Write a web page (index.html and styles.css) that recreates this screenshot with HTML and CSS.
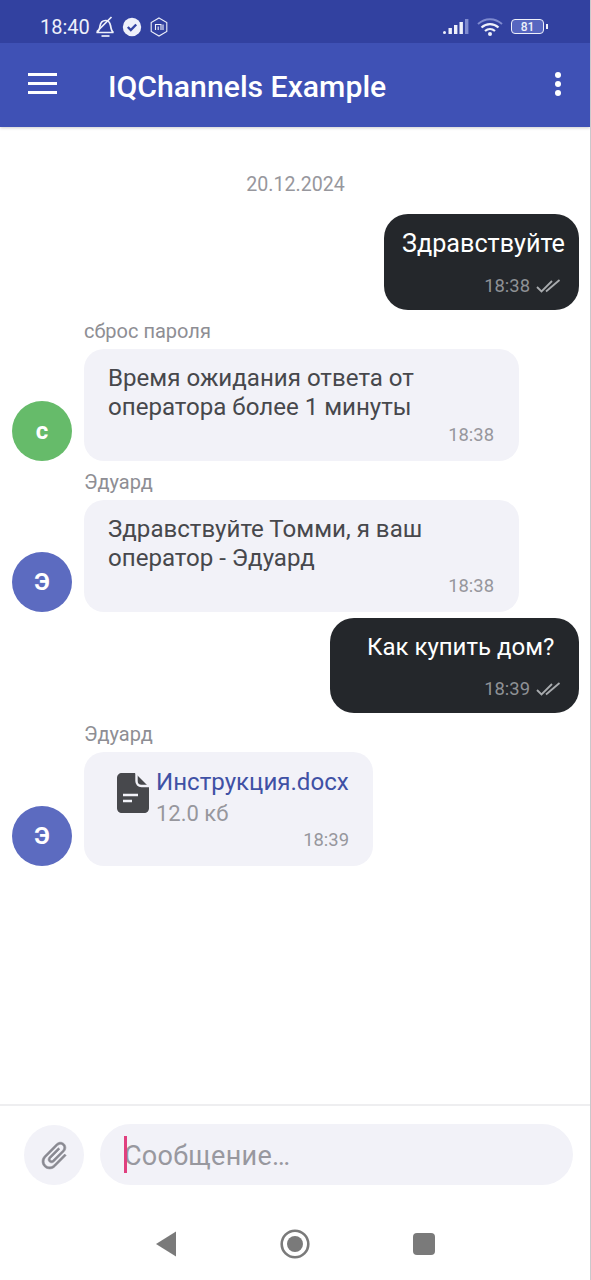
FILE: index.html
```html
<!DOCTYPE html>
<html lang="ru">
<head>
	<meta charset="utf-8">
	<title>IQChannels Example</title>
	<link rel="stylesheet" href="styles.css">
</head>
<body>
	<div class="screen">
		<header class="appbar">
			<div class="status">
				<span class="clock">18:40</span>
				<svg class="st-bell" width="24" height="24" viewBox="0 0 24 24" fill="none" stroke="#eef0fa" stroke-width="1.700">
					<path d="M3.500 17.500c2.500-1 3-3 3.500-6.500C7.500 8 9.500 5.500 12.500 5.500c3 0 4.500 2.300 5 5 .5 3 1 6 3 7z"/>
					<path d="M8.500 21h8"/>
					<path d="M4 16.500L18.500 2"/>
				</svg>
				<svg class="st-check" width="20" height="20" viewBox="0 0 20 20">
					<circle cx="10" cy="10" r="9.200" fill="#eef0fa"/>
					<path d="M5.800 10l3 3 5.400-5.500" fill="none" stroke="#3444a3" stroke-width="2.400"/>
				</svg>
				<svg class="st-mi" width="20" height="20" viewBox="0 0 20 20" fill="none" stroke="#eef0fa">
					<path d="M10 1l7.800 4.500v9L10 19l-7.800-4.500v-9z" stroke-width="1.100"/>
					<path d="M6.500 13V7.500h5.500V13M9.200 9.500V13M14 7.500V13" stroke-width="1.100"/>
				</svg>
				<span class="status-gap"></span>
				<svg class="st-signal" width="28" height="18" viewBox="0 0 28 18">
					<rect x="1" y="13" width="3" height="3" rx="1.500" fill="#eef0fa"/>
					<rect x="6.500" y="10" width="3.400" height="6" fill="#eef0fa"/>
					<rect x="12" y="7" width="3.400" height="9" fill="#eef0fa"/>
					<rect x="17.500" y="4" width="3.400" height="12" fill="#eef0fa"/>
					<rect x="23" y="1" width="3.400" height="15" fill="#7f8bd0"/>
				</svg>
				<svg class="st-wifi" width="26" height="20" viewBox="0 0 26 20" fill="none">
					<path d="M1 7c7-6.500 17-6.500 24 0" stroke="#7f8bd0" stroke-width="2"/>
					<path d="M4.500 10.500c5-4.500 12-4.500 17 0" stroke="#eef0fa" stroke-width="2.200"/>
					<path d="M8 14c3-2.600 7-2.600 10 0" stroke="#eef0fa" stroke-width="2.200"/>
					<circle cx="13" cy="17" r="2" fill="#eef0fa"/>
				</svg>
				<div class="battery"><span class="battery-num">81</span></div>
				<span class="battery-tip"></span>
			</div>
			<div class="toolbar">
				<div class="burger"><i></i><i></i><i></i></div>
				<h1 class="title">IQChannels Example</h1>
				<div class="dots"><i></i><i></i><i></i></div>
			</div>
		</header>

		<main class="chat">
			<div class="date">20.12.2024</div>

			<div class="msg-out first-out">
				<div class="bubble-out">
					<div class="text-out text-hello">Здравствуйте</div>
					<div class="meta-out">
						<span class="time-out">18:38</span>
						<svg class="ticks" width="25" height="14" viewBox="0 0 25 14" fill="none" stroke="#a8abae" stroke-width="1.800"><path d="M1 8l4.500 4.500L16 2"/><path d="M10 12.500L23.500 1"/></svg>
					</div>
				</div>
			</div>

			<div class="sender first-sender">сброс пароля</div>
			<div class="msg-in">
				<div class="avatar avatar-green">с</div>
				<div class="bubble-in">
					<div class="text-in">Время ожидания ответа от<br>оператора более 1 минуты</div>
					<div class="time-in">18:38</div>
				</div>
			</div>

			<div class="sender">Эдуард</div>
			<div class="msg-in">
				<div class="avatar">Э</div>
				<div class="bubble-in">
					<div class="text-in">Здравствуйте Томми, я ваш<br>оператор - Эдуард</div>
					<div class="time-in">18:38</div>
				</div>
			</div>

			<div class="msg-out second-out">
				<div class="bubble-out bubble-wide">
					<div class="text-out">Как купить дом?</div>
					<div class="meta-out">
						<span class="time-out">18:39</span>
						<svg class="ticks" width="25" height="14" viewBox="0 0 25 14" fill="none" stroke="#a8abae" stroke-width="1.800"><path d="M1 8l4.500 4.500L16 2"/><path d="M10 12.500L23.500 1"/></svg>
					</div>
				</div>
			</div>

			<div class="sender">Эдуард</div>
			<div class="msg-in">
				<div class="avatar">Э</div>
				<div class="bubble-file">
					<div class="file-row">
						<svg class="file-icon" width="32" height="40" viewBox="0 0 32 40">
							<path d="M5 0h13l14 14v21c0 3-2 5-5 5H5c-3 0-5-2-5-5V5c0-3 2-5 5-5z" fill="#47484c"/>
							<path d="M19.500 0v8c0 3 2 5 5 5h7.500" fill="none" stroke="#f2f2f8" stroke-width="2.400"/>
							<path d="M6 22h15M6 28h9" stroke="#f2f2f8" stroke-width="2.400"/>
						</svg>
						<div>
							<div class="file-name">Инструкция.docx</div>
							<div class="file-size">12.0 кб</div>
						</div>
					</div>
					<div class="time-in file-time">18:39</div>
				</div>
			</div>
		</main>

		<footer class="composer">
			<div class="attach">
				<svg class="clip" width="33" height="33" viewBox="0 0 24 24">
					<path d="M16.500 6v11.500c0 2.210-1.790 4-4 4s-4-1.790-4-4V5c0-1.380 1.120-2.500 2.500-2.500s2.500 1.120 2.500 2.500v10.500c0 .55-.45 1-1 1s-1-.45-1-1V6H10v9.500c0 1.380 1.120 2.500 2.500 2.500s2.500-1.120 2.500-2.500V5c0-2.210-1.790-4-4-4S7 2.790 7 5v12.500c0 3.040 2.460 5.500 5.500 5.500s5.500-2.460 5.500-5.500V6h-1.500z" fill="#8a8a92" stroke="#8a8a92" stroke-width="0.400"/>
				</svg>
			</div>
			<div class="input"><span class="caret"></span><span class="placeholder">Сообщение…</span></div>
		</footer>

		<nav class="navbar">
			<svg width="22" height="26" viewBox="0 0 22 26"><path d="M21 0.500v25L1 13z" fill="#7a7a7a"/></svg>
			<svg width="30" height="30" viewBox="0 0 30 30"><circle cx="15" cy="15" r="13.300" fill="none" stroke="#7a7a7a" stroke-width="2.600"/><circle cx="15" cy="15" r="8" fill="#7a7a7a"/></svg>
			<span class="nav-square"></span>
		</nav>
	</div>
</body>
</html>
```

FILE: styles.css
```css
html, body {
	margin: 0;
	padding: 0;
	background: #fff;
}

.screen {
	width: 590px;
	height: 1280px;
	border-right: 1px solid #c9c9cc;
	display: flex;
	flex-direction: column;
	overflow: hidden;
	font-family: Roboto, "Liberation Sans", sans-serif;
}

/* top bars */
.appbar {
	background: #3f51b5;
	box-shadow: 0 1px 3px rgba(0, 0, 0, 0.2);
	flex: none;
}

.status {
	height: 43px;
	background: #3241a0;
	display: flex;
	align-items: center;
	padding: 10px 42px 0 40px;
	box-sizing: border-box;
	color: #eef0fa;
}

.clock {
	font-size: 20px;
	margin-right: 3px;
}

.st-check {
	margin-left: 5px;
}

.st-mi {
	margin-left: 7px;
}

.status-gap {
	flex: 1;
}

.st-wifi {
	margin-left: 7px;
}

.battery {
	width: 31px;
	height: 13px;
	border: 1.500px solid #eef0fa;
	border-radius: 4px;
	margin-left: 8px;
	display: flex;
	align-items: center;
	justify-content: center;
	background: #5766c0;
}

.battery-num {
	font-size: 12px;
	font-weight: 500;
}

.battery-tip {
	width: 2px;
	height: 5px;
	background: #eef0fa;
	margin-left: 2px;
}

.toolbar {
	height: 84px;
	display: flex;
	align-items: center;
	padding: 0 29px 0 28px;
	color: #fff;
}

.burger i {
	display: block;
	width: 29px;
	height: 3px;
	background: #fff;
	margin-bottom: 6px;
}

.burger i:last-child {
	margin-bottom: 0;
}

.burger {
	margin-top: -3px;
}

.title {
	flex: 1;
	margin: 3px 0 0 51px;
	font-size: 30.200px;
	font-weight: 500;
}

.dots i {
	display: block;
	width: 6px;
	height: 6px;
	border-radius: 50%;
	background: #fff;
	margin-bottom: 3px;
}

/* messages */
.chat {
	flex: 1;
	padding: 0 11px 0 12px;
}

.date {
	margin-top: 47px;
	text-align: center;
	font-size: 19.600px;
	line-height: 21px;
	color: #97979d;
}

.msg-out {
	display: flex;
	justify-content: flex-end;
}

.first-out {
	margin-top: 19px;
}

.second-out {
	margin-top: 6px;
}

.bubble-out {
	box-sizing: border-box;
	width: 195px;
	height: 96px;
	padding: 15px 14px 0 18px;
	background: #24272b;
	border-radius: 24px;
	color: #fff;
}

.bubble-wide {
	width: 249px;
	height: 95px;
	padding: 14px 25px 0 37px;
}

.text-out {
	font-size: 24px;
	line-height: 30px;
	white-space: nowrap;
}

.text-hello {
	font-size: 25.200px;
}

.meta-out {
	display: flex;
	align-items: center;
	justify-content: flex-end;
	margin-top: 16px;
	margin-right: 4px;
}

.bubble-wide .meta-out {
	margin-right: -7px;
}

.time-out {
	font-size: 18.400px;
	line-height: 21px;
	color: #8e9195;
}

.ticks {
	margin-left: 6px;
}

.sender {
	margin: 11px 0 0 72px;
	font-size: 20px;
	line-height: 20px;
	color: #8e8e94;
}

.msg-in {
	display: flex;
	align-items: flex-end;
	gap: 12px;
	margin-top: 8px;
}

.avatar {
	width: 60px;
	height: 60px;
	border-radius: 50%;
	background: #5c6bc0;
	color: #fff;
	display: flex;
	align-items: center;
	justify-content: center;
	font-size: 24px;
	font-weight: 700;
	flex: none;
}

.avatar-green {
	background: #66bb6a;
}

.bubble-in {
	box-sizing: border-box;
	width: 435px;
	height: 112px;
	padding: 15px 25px 0 24px;
	background: #f2f2f8;
	border-radius: 20px;
}

.text-in {
	font-size: 24.100px;
	line-height: 29px;
	color: #47484c;
}

.time-in {
	margin-top: 2px;
	text-align: right;
	font-size: 18.400px;
	line-height: 21px;
	color: #97979d;
}

.bubble-file {
	box-sizing: border-box;
	width: 289px;
	height: 114px;
	padding: 16px 24px 0 33px;
	background: #f2f2f8;
	border-radius: 20px;
}

.file-row {
	display: flex;
	gap: 7px;
}

.file-icon {
	margin-top: 5px;
	flex: none;
}

.file-name {
	font-size: 24.100px;
	line-height: 29px;
	color: #3f51a5;
	white-space: nowrap;
}

.file-size {
	padding-top: 1px;
	font-size: 22px;
	line-height: 32px;
	color: #97979d;
}

.file-time {
	margin-top: -1px;
}

/* bottom */
.composer {
	flex: none;
	height: 101px;
	border-top: 2px solid #eeeef0;
	display: flex;
	align-items: flex-start;
	padding: 18px 17px 0 24px;
	gap: 16px;
	box-sizing: border-box;
}

.attach {
	width: 60px;
	height: 60px;
	margin-top: 1px;
	border-radius: 50%;
	background: #f2f2f8;
	display: flex;
	align-items: center;
	justify-content: center;
	flex: none;
}

.clip {
	transform: rotate(45deg);
}

.input {
	flex: 1;
	height: 61px;
	border-radius: 31px;
	background: #f2f2f8;
	display: flex;
	align-items: center;
	padding: 2px 0 0 24px;
	box-sizing: border-box;
	position: relative;
}

.caret {
	position: absolute;
	left: 24px;
	top: 12px;
	width: 3px;
	height: 37px;
	background: #e0407f;
}

.placeholder {
	font-size: 27px;
	color: #98989f;
	letter-spacing: 0.300px;
}

.navbar {
	flex: none;
	height: 75px;
	display: flex;
	align-items: center;
	padding: 3px 155px 0 155px;
	justify-content: space-between;
	box-sizing: border-box;
}

.nav-square {
	width: 22px;
	height: 22px;
	border-radius: 4px;
	background: #7a7a7a;
}
```
